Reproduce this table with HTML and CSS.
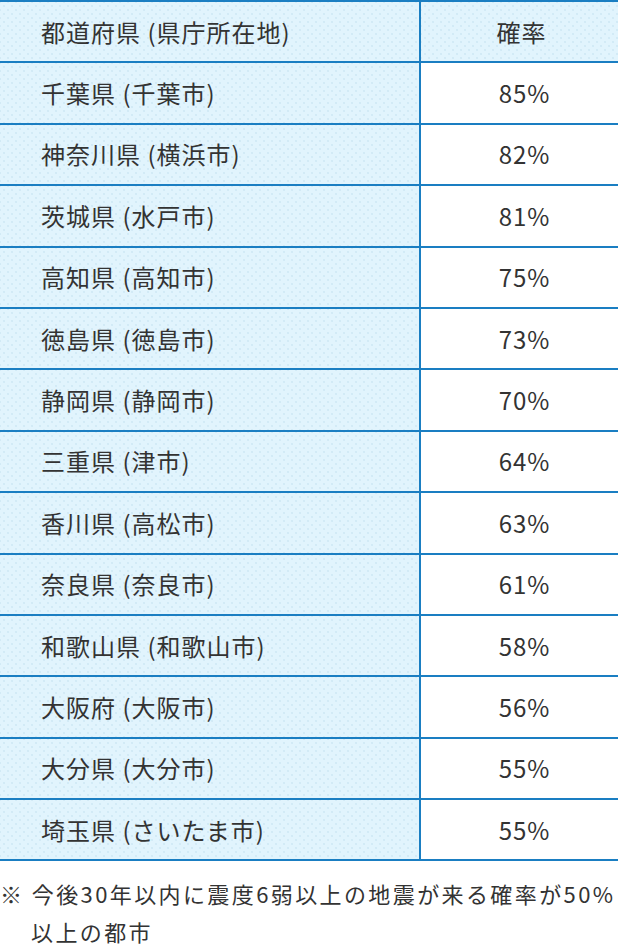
FILE: index.html
```html
<!DOCTYPE html>
<html lang="ja">
<head>
<meta charset="utf-8">
<title>確率</title>
<link rel="stylesheet" href="styles.css">
</head>
<body>
<table class="rate-table">
  <colgroup><col class="col-pref"><col class="col-rate"></colgroup>
  <thead>
    <tr><th class="pref">都道府県 (県庁所在地)</th><th class="rate head-rate">確率</th></tr>
  </thead>
  <tbody>
    <tr><td class="pref">千葉県 (千葉市)</td><td class="rate">85%</td></tr>
    <tr><td class="pref">神奈川県 (横浜市)</td><td class="rate">82%</td></tr>
    <tr><td class="pref">茨城県 (水戸市)</td><td class="rate">81%</td></tr>
    <tr><td class="pref">高知県 (高知市)</td><td class="rate">75%</td></tr>
    <tr><td class="pref">徳島県 (徳島市)</td><td class="rate">73%</td></tr>
    <tr><td class="pref">静岡県 (静岡市)</td><td class="rate">70%</td></tr>
    <tr><td class="pref">三重県 (津市)</td><td class="rate">64%</td></tr>
    <tr><td class="pref">香川県 (高松市)</td><td class="rate">63%</td></tr>
    <tr><td class="pref">奈良県 (奈良市)</td><td class="rate">61%</td></tr>
    <tr><td class="pref">和歌山県 (和歌山市)</td><td class="rate">58%</td></tr>
    <tr><td class="pref">大阪府 (大阪市)</td><td class="rate">56%</td></tr>
    <tr><td class="pref">大分県 (大分市)</td><td class="rate">55%</td></tr>
    <tr><td class="pref">埼玉県 (さいたま市)</td><td class="rate">55%</td></tr>
  </tbody>
</table>
<p class="note"><span class="note-line">※ 今後30年以内に震度6弱以上の地震が来る確率が50%</span><br>以上の都市</p>
</body>
</html>
```
FILE: styles.css
```css
html, body {
  margin: 0;
  padding: 0;
  background: #ffffff;
}
body {
  width: 618px;
  font-family: "Noto Sans CJK JP", "Noto Sans", sans-serif;
  color: #333333;
}
.rate-table {
  width: 618px;
  border-collapse: collapse;
  table-layout: fixed;
}
.col-pref { width: 420px; }
.col-rate { width: 198px; }
.rate-table th,
.rate-table td {
  height: 59.4px;
  padding: 0;
  border-top: 2px solid #1a7ec2;
  border-bottom: 2px solid #1a7ec2;
  font-size: 24px;
  font-weight: 400;
  letter-spacing: 1px;
  line-height: 1;
  vertical-align: middle;
}
.rate-table .pref,
.rate-table .head-rate {
  background-color: #e1f4fd;
  background-image:
    radial-gradient(circle, #d2eaf6 0.7px, transparent 1px),
    radial-gradient(circle, #d2eaf6 0.7px, transparent 1px);
  background-size: 8px 8px, 8px 8px;
  background-position: 0 0, 4px 4px;
}
.rate-table .pref {
  text-align: left;
  padding-left: 41px;
  border-right: 2px solid #1a7ec2;
}
.rate-table .rate {
  text-align: center;
  padding-left: 10px;
}
.rate-table td.rate {
  background: #ffffff;
}
.rate-table .head-rate {
  padding-left: 4px;
}
.note {
  margin: 13px 0 0 0;
  padding-left: 31px;
  text-indent: -31px;
  font-size: 22px;
  letter-spacing: 2.4px;
  line-height: 38px;
  color: #333333;
}
.note-line {
  white-space: nowrap;
}
```
